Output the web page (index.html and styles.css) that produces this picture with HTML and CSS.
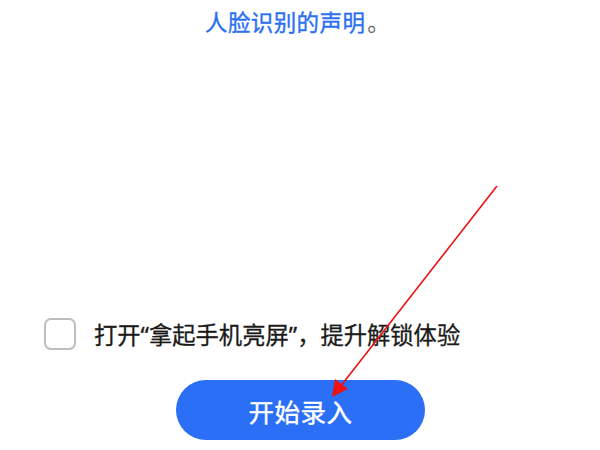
FILE: index.html
```html
<!DOCTYPE html>
<html lang="zh">
<head>
<meta charset="utf-8">
<link rel="stylesheet" href="styles.css">
</head>
<body>
<div class="page">
  <p class="statement"><span class="link">人脸识别的声明</span><span class="dot">。</span></p>
  <div class="spacer"></div>
  <label class="option">
    <span class="box"></span>
    <span class="option-text">打开<span class="q">“</span>拿起手机亮屏<span class="q">”</span>，提升解锁体验</span>
  </label>
  <div class="actions">
    <button class="primary">开始录入</button>
  </div>
  <svg class="annotation" width="600" height="450" viewBox="0 0 600 450">
    <line x1="497" y1="186" x2="340" y2="387" stroke="#f01010" stroke-width="1.6"/>
    <polygon points="332,397 335,379 348,389" fill="#f01010"/>
  </svg>
</div>
</body>
</html>
```
FILE: styles.css
```css
* { box-sizing: border-box; }
html, body { margin: 0; padding: 0; background: #fff; }
body {
  font-family: "Noto Sans CJK SC", "Noto Sans", sans-serif;
}
.page {
  position: relative;
  width: 600px;
  height: 450px;
  display: flex;
  flex-direction: column;
  overflow: hidden;
}
.statement {
  margin: 0;
  padding: 6px 0 0 205px;
  font-size: 22.5px;
  font-weight: 400;
  line-height: 30px;
  letter-spacing: 0.4px;
  -webkit-text-stroke: 0.35px currentColor;
}
.link { color: #2a6ff2; }
.dot { color: #666; margin-left: 2px; -webkit-text-stroke: 0; }
.spacer { flex: 1; }
.option {
  display: flex;
  align-items: center;
  padding-left: 44px;
  gap: 18px;
  height: 32px;
}
.box {
  width: 32px;
  height: 32px;
  border: 2px solid #bdbdbd;
  border-radius: 7px;
  flex: none;
}
.option-text {
  font-size: 23.3px;
  font-weight: 400;
  color: #1a1a1a;
  line-height: 32px;
  -webkit-text-stroke: 0.3px currentColor;
}
.q {
  font-family: "Noto Sans", sans-serif;
}
.actions {
  display: flex;
  padding: 30px 0 10px 176px;
}
.primary {
  width: 249px;
  height: 60px;
  border: none;
  border-radius: 30px;
  background: #2a6ff6;
  color: #fff;
  font-family: inherit;
  font-size: 25.5px;
  font-weight: 400;
  letter-spacing: 0.5px;
  padding: 0;
  -webkit-text-stroke: 0.4px currentColor;
}
.annotation {
  position: absolute;
  left: 0;
  top: 0;
  pointer-events: none;
}
```
